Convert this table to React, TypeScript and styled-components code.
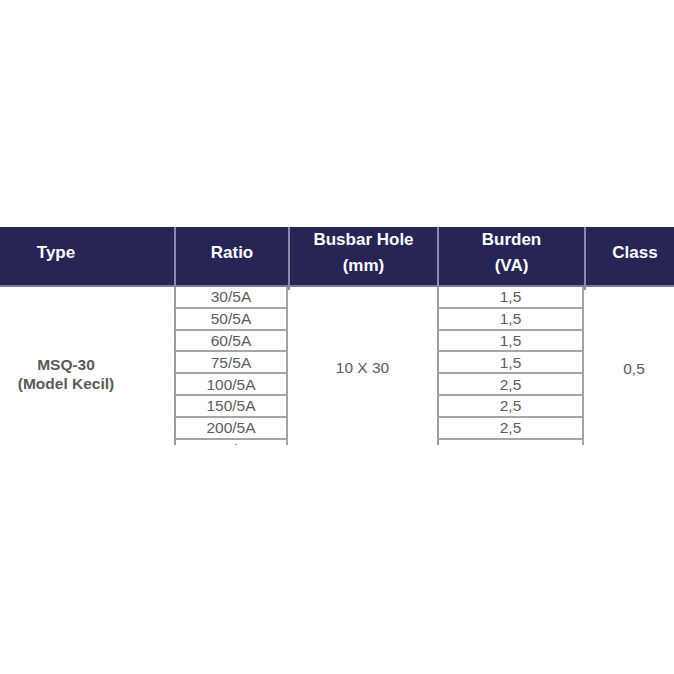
import React from "react";
import styled, { createGlobalStyle } from "styled-components";

const Global = createGlobalStyle`
  html, body { margin: 0; padding: 0; background: #ffffff; }
  body { font-family: "Liberation Sans", Arial, Helvetica, sans-serif; overflow: hidden; }
`;

const COLS = "174px 114px 149px 147px 100px";
const ROW_H = 21.8;

const Page = styled.div`
  width: 674px;
  height: 674px;
  overflow: hidden;
  padding-top: 227px;
  box-sizing: border-box;
`;

const Table = styled.div`
  width: 684px;
`;

const HeaderRow = styled.div`
  display: grid;
  grid-template-columns: ${COLS};
  height: 60px;
  background: #262556;
  border-bottom: 2px solid #7d7b9c;
  box-sizing: border-box;
`;

const HeadCell = styled.div<{ $first?: boolean; $padRight?: number }>`
  display: flex;
  align-items: center;
  justify-content: center;
  text-align: center;
  color: #ffffff;
  font-weight: 700;
  font-size: 17px;
  line-height: 26px;
  padding-bottom: 11px;
  padding-right: ${(p) => p.$padRight ?? 0}px;
  border-left: ${(p) => (p.$first ? "none" : "2px solid #8c8aab")};
  box-sizing: border-box;
`;

const Body = styled.div`
  display: grid;
  grid-template-columns: ${COLS};
  grid-template-rows: repeat(8, ${ROW_H}px);
  height: 158px;
  overflow: hidden;
  align-content: start;
`;

const SpanCell = styled.div<{ $col: number; $bold?: boolean; $padRight?: number; $padBottom?: number }>`
  grid-column: ${(p) => p.$col};
  grid-row: 1 / span 8;
  display: flex;
  align-items: center;
  justify-content: center;
  text-align: center;
  color: #5a5a5a;
  font-size: 15.5px;
  line-height: 19px;
  font-weight: ${(p) => (p.$bold ? 700 : 400)};
  padding-right: ${(p) => p.$padRight ?? 0}px;
  padding-bottom: ${(p) => p.$padBottom ?? 0}px;
  box-sizing: border-box;
`;

const ListCell = styled.div<{ $col: number; $row: number }>`
  grid-column: ${(p) => p.$col};
  grid-row: ${(p) => p.$row};
  display: flex;
  align-items: center;
  justify-content: center;
  color: #5c5c5c;
  font-size: 15.5px;
  border-left: 2px solid #9a9a9a;
  border-right: 2px solid #a3a3a3;
  border-bottom: 2px solid #a6a6a6;
  box-sizing: border-box;
  padding-top: 1px;
`;

const ratios = ["30/5A", "50/5A", "60/5A", "75/5A", "100/5A", "150/5A", "200/5A", "250/5A"];
const burdens = ["1,5", "1,5", "1,5", "1,5", "2,5", "2,5", "2,5", "2,5"];

export default function App() {
  return (
    <>
      <Global />
      <Page>
        <Table>
          <HeaderRow>
            <HeadCell $first $padRight={62}>Type</HeadCell>
            <HeadCell>Ratio</HeadCell>
            <HeadCell>
              Busbar Hole
              <br />
              (mm)
            </HeadCell>
            <HeadCell>
              Burden
              <br />
              (VA)
            </HeadCell>
            <HeadCell>Class</HeadCell>
          </HeaderRow>
          <Body>
            <SpanCell $col={1} $bold $padRight={42} $padBottom={0}>
              MSQ-30
              <br />
              (Model Kecil)
            </SpanCell>
            {ratios.map((r, i) => (
              <ListCell key={"r" + i} $col={2} $row={i + 1}>
                {r}
              </ListCell>
            ))}
            <SpanCell $col={3} $padBottom={14}>10 X 30</SpanCell>
            {burdens.map((b, i) => (
              <ListCell key={"b" + i} $col={4} $row={i + 1}>
                {b}
              </ListCell>
            ))}
            <SpanCell $col={5} $padBottom={12}>0,5</SpanCell>
          </Body>
        </Table>
      </Page>
    </>
  );
}
